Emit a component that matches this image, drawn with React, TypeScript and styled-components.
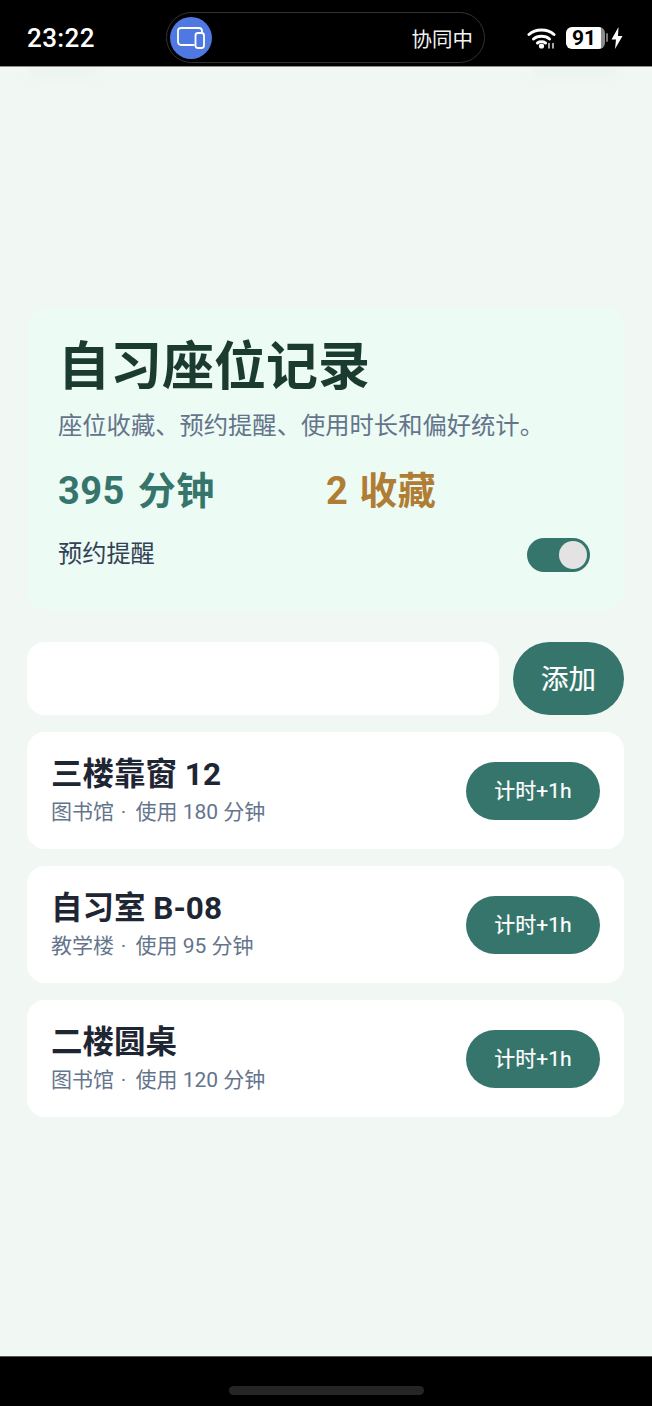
import styled, { createGlobalStyle } from 'styled-components'

const GlobalStyle = createGlobalStyle`
  html, body {
    margin: 0;
    padding: 0;
    background: #000;
  }
  * {
    box-sizing: border-box;
  }
`

const FONT = `Roboto, "Noto Sans CJK SC", sans-serif`

const Page = styled.div`
  width: 652px;
  height: 1406px;
  display: flex;
  flex-direction: column;
  background: #f1f8f4;
  font-family: ${FONT};
  overflow: hidden;
`

const StatusBar = styled.header`
  height: 67px;
  flex: none;
  background: #000;
  border-bottom: 1px solid #8a8f8c;
  color: #fff;
  display: flex;
  align-items: center;
  padding: 9px 29px 0 27px;
`

const Clock = styled.span`
  width: 139px;
  font-size: 26px;
  font-weight: 500;
  letter-spacing: 0.4px;
`

const Island = styled.div`
  width: 319px;
  height: 51px;
  border: 1px solid #333;
  border-radius: 26px;
  display: flex;
  align-items: center;
  justify-content: space-between;
  padding: 0 11px 0 3px;
`

const IslandIcon = styled.span`
  width: 42px;
  height: 42px;
  border-radius: 50%;
  background: #4f78e2;
  display: flex;
  align-items: center;
  justify-content: center;
`

const IslandLabel = styled.span`
  font-size: 20.5px;
  color: #f2f2f2;
`

const StatusIcons = styled.div`
  margin-left: auto;
  display: flex;
  align-items: center;
`

const Battery = styled.span`
  width: 39px;
  height: 22px;
  margin-left: 9px;
  border-radius: 6px;
  background: linear-gradient(90deg, #fff 90%, #8c8c8c 90%);
  color: #000;
  font-size: 21px;
  font-weight: 700;
  line-height: 22px;
  text-align: center;
  padding-right: 3px;
`

const BatteryTip = styled.span`
  width: 2px;
  height: 9px;
  margin: 0 3px 0 1px;
  border-radius: 1px;
  background: #777;
`

const Main = styled.main`
  flex: 1;
  position: relative;
  overflow: hidden;
  padding: 241px 28px 0 27px;
  display: flex;
  flex-direction: column;
`

const TopGlow = styled.span<{ $left: number; $width: number }>`
  position: absolute;
  top: 1px;
  left: ${({ $left }) => $left}px;
  width: ${({ $width }) => $width}px;
  height: 8px;
  background: #ecf3ef;
  filter: blur(4px);
`

const Hero = styled.section`
  height: 302px;
  border-radius: 18px;
  background: #ecfbf4;
  padding: 28px 34px 0 31px;
  display: flex;
  flex-direction: column;
`

const Title = styled.h1`
  margin: 0;
  font-size: 52px;
  line-height: 64px;
  font-weight: 700;
  color: #1b3a30;
`

const Subtitle = styled.p`
  margin: 9px 0 0;
  font-size: 24.3px;
  line-height: 34px;
  color: #64748b;
`

const Stats = styled.div`
  margin-top: 23px;
  display: flex;
`

const Stat = styled.div<{ $color: string; $width: number; $gap: number }>`
  width: ${({ $width }) => $width}px;
  font-size: 38px;
  line-height: 50px;
  font-weight: 700;
  word-spacing: ${({ $gap }) => $gap}px;
  letter-spacing: 0.5px;
  color: ${({ $color }) => $color};
`

const ReminderRow = styled.div`
  margin-top: 22px;
  display: flex;
  align-items: center;
  justify-content: space-between;
`

const ReminderLabel = styled.span`
  padding-bottom: 2px;
  font-size: 24.2px;
  line-height: 32px;
  color: #334155;
`

const Toggle = styled.span`
  width: 63px;
  height: 34px;
  border-radius: 17px;
  background: #35756b;
  display: flex;
  align-items: center;
  justify-content: flex-end;
  padding-right: 3px;
`

const ToggleThumb = styled.span`
  width: 28px;
  height: 28px;
  border-radius: 50%;
  background: #e3e3e3;
`

const AddRow = styled.div`
  margin-top: 32px;
  display: flex;
  gap: 14px;
`

const SeatInput = styled.input`
  flex: 1;
  min-width: 0;
  height: 73px;
  border: 0;
  border-radius: 18px;
  background: #fff;
  outline: none;
`

const PillButton = styled.button<{ $size: 'lg' | 'md' }>`
  flex: none;
  width: ${({ $size }) => ($size === 'lg' ? 111 : 134)}px;
  height: ${({ $size }) => ($size === 'lg' ? 73 : 58)}px;
  border: 0;
  border-radius: 37px;
  background: #35756b;
  color: #fff;
  font-family: ${FONT};
  font-size: ${({ $size }) => ($size === 'lg' ? 27.5 : 21)}px;
  font-weight: 400;
  -webkit-text-stroke: 0.2px #fff;
  padding: 0 0 3px;
`

const SeatList = styled.div`
  margin-top: 17px;
  display: flex;
  flex-direction: column;
  gap: 17px;
`

const SeatCard = styled.article`
  height: 117px;
  border-radius: 18px;
  background: #fff;
  display: flex;
  align-items: center;
  justify-content: space-between;
  padding: 0 24px;
`

const SeatInfo = styled.div`
  display: flex;
  flex-direction: column;
  padding-bottom: 1px;
`

const SeatName = styled.div`
  font-size: 31.5px;
  line-height: 42px;
  font-weight: 700;
  color: #1e2533;
`

const SeatMeta = styled.div`
  margin-top: 1px;
  font-size: 21px;
  line-height: 30px;
  color: #64748b;
`

const MetaDot = styled.span`
  margin: 0 4px 0 1.5px;
`

const NavBar = styled.footer`
  height: 50px;
  flex: none;
  background: #000;
  border-top: 1px solid #555;
  display: flex;
  justify-content: center;
  padding-top: 29px;
`

const HomeIndicator = styled.span`
  width: 195px;
  height: 9px;
  border-radius: 5px;
  background: #252525;
`

const seats = [
  { name: '三楼靠窗 12', place: '图书馆', usage: '使用 180 分钟' },
  { name: '自习室 B-08', place: '教学楼', usage: '使用 95 分钟' },
  { name: '二楼圆桌', place: '图书馆', usage: '使用 120 分钟' },
]

const DevicesIcon = () => (
  <svg width="28" height="22" viewBox="0 0 28 22" fill="none" stroke="#fff" strokeWidth="1.8">
    <path d="M17.5 18H4a3 3 0 0 1-3-3V4a3 3 0 0 1 3-3h18a3 3 0 0 1 3 3v1.5" />
    <rect x="18.5" y="6" width="8.5" height="15" rx="2.5" />
  </svg>
)

const WifiIcon = () => (
  <svg width="30" height="22" viewBox="0 0 30 22" fill="none" stroke="#fff" strokeWidth="3" strokeLinecap="round">
    <path d="M2 7.5c6.5-6 18.5-6 25 0" />
    <path d="M6.5 12c4-3.6 12-3.6 16 0" />
    <path d="M10.5 16c2.2-1.6 5.8-1.6 8 0" />
    <circle cx="14.5" cy="19" r="2.6" fill="#fff" stroke="none" />
    <path d="M22 16.5v4.5M26 16.5v4.5" strokeWidth="1.3" />
  </svg>
)

const BoltIcon = () => (
  <svg width="12" height="22" viewBox="0 0 12 22" fill="#fff">
    <path d="M7.5 0 0.5 12.5H5L4 22l7.5-13H7z" />
  </svg>
)

export default function App() {
  return (
    <Page>
      <GlobalStyle />
      <StatusBar>
        <Clock>23:22</Clock>
        <Island>
          <IslandIcon>
            <DevicesIcon />
          </IslandIcon>
          <IslandLabel>协同中</IslandLabel>
        </Island>
        <StatusIcons>
          <WifiIcon />
          <Battery>91</Battery>
          <BatteryTip />
          <BoltIcon />
        </StatusIcons>
      </StatusBar>
      <Main>
        <TopGlow $left={28} $width={70} />
        <TopGlow $left={532} $width={85} />
        <Hero>
          <Title>自习座位记录</Title>
          <Subtitle>座位收藏、预约提醒、使用时长和偏好统计。</Subtitle>
          <Stats>
            <Stat $color="#35756b" $width={268} $gap={3}>395 分钟</Stat>
            <Stat $color="#b07d35" $width={200} $gap={1}>2 收藏</Stat>
          </Stats>
          <ReminderRow>
            <ReminderLabel>预约提醒</ReminderLabel>
            <Toggle>
              <ToggleThumb />
            </Toggle>
          </ReminderRow>
        </Hero>
        <AddRow>
          <SeatInput />
          <PillButton $size="lg">添加</PillButton>
        </AddRow>
        <SeatList>
          {seats.map((seat) => (
            <SeatCard key={seat.name}>
              <SeatInfo>
                <SeatName>{seat.name}</SeatName>
                <SeatMeta>
                  {seat.place} <MetaDot>·</MetaDot> {seat.usage}
                </SeatMeta>
              </SeatInfo>
              <PillButton $size="md">计时+1h</PillButton>
            </SeatCard>
          ))}
        </SeatList>
      </Main>
      <NavBar>
        <HomeIndicator />
      </NavBar>
    </Page>
  )
}
